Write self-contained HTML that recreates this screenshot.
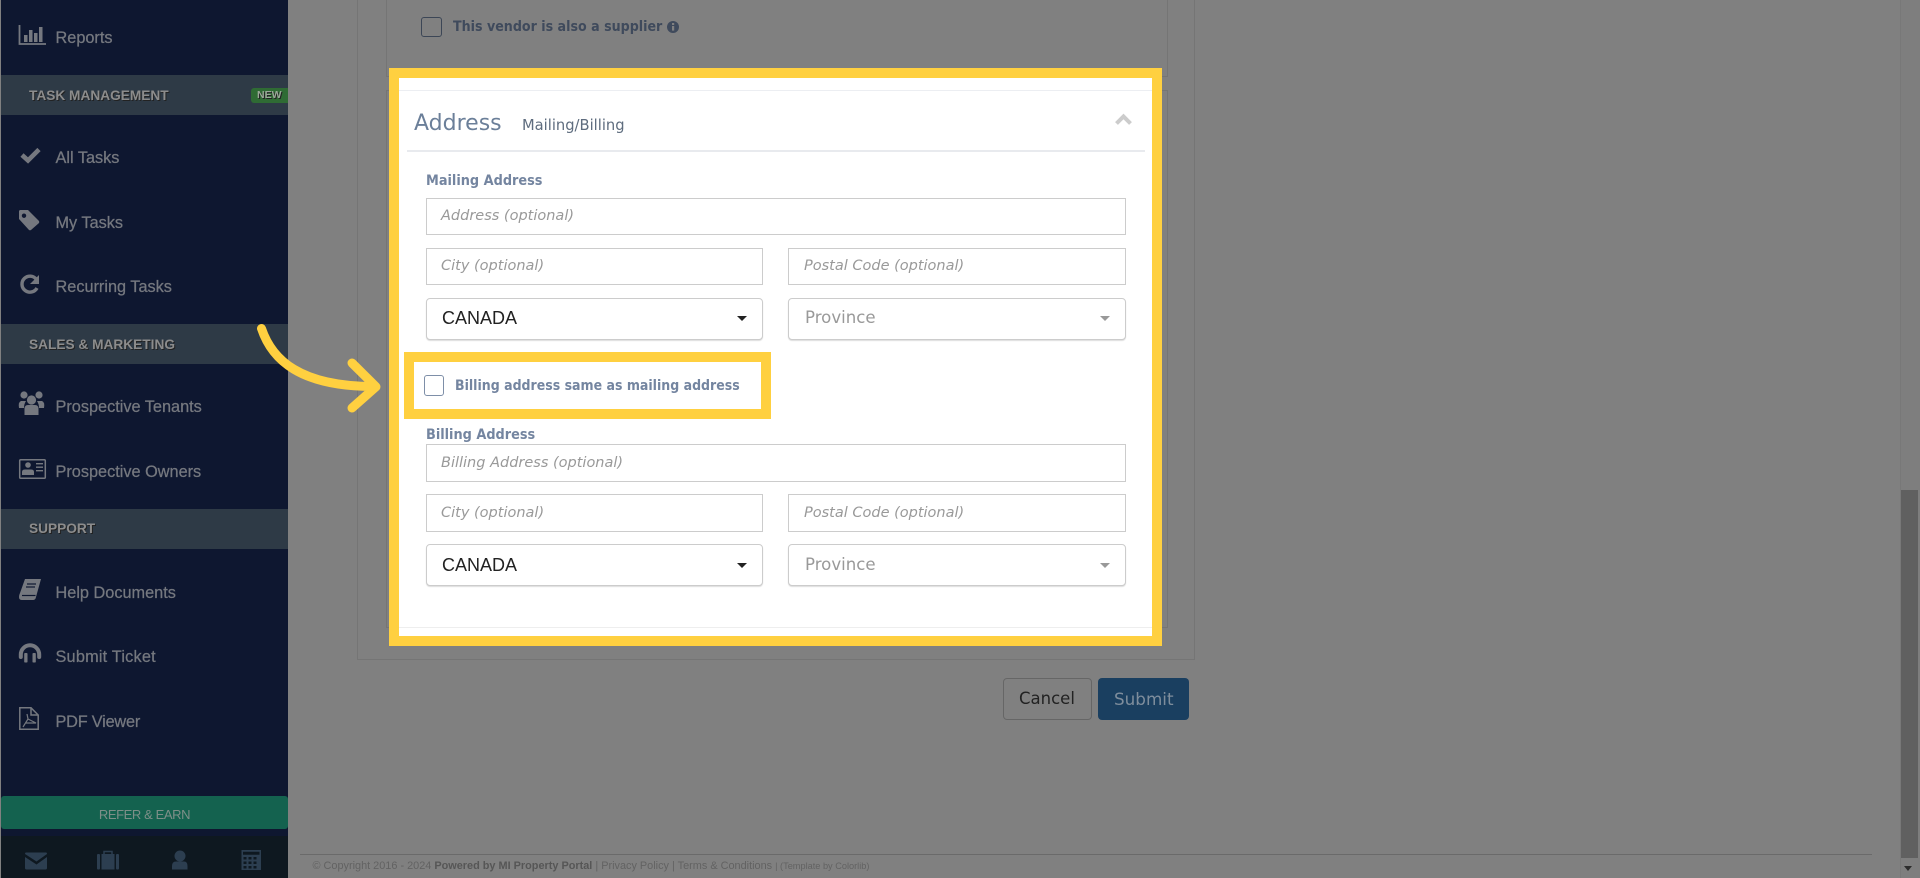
<!DOCTYPE html>
<html><head><meta charset="utf-8"><style>
html,body{margin:0;padding:0;width:1920px;height:878px;overflow:hidden;background:#808080}
div,span,svg{position:absolute}
.t{white-space:nowrap;line-height:20px;font-family:"DejaVu Sans",sans-serif}
.nav{left:55.500px;color:#75787f;font:16.300px/20px "Liberation Sans",sans-serif;white-space:nowrap;-webkit-text-stroke:.25px #75787f}
.band{left:1px;width:287px;height:40px;background:#2e3a46}
.sec{left:29px;color:#8c8c8c;font:bold 13.700px/20px "Liberation Sans",sans-serif;text-shadow:1px 1px 0 #222;white-space:nowrap}
.in{background:#fff;border:1.500px solid #ccc;box-sizing:border-box}
.ph{font:oblique 14.500px/20px "DejaVu Sans",sans-serif;color:#999;white-space:nowrap}
.sel{background:#fff;border:1.500px solid #ccc;border-radius:4px;box-sizing:border-box;box-shadow:0 1px 1px #ddd}
.can{font:18px/20px "Liberation Sans",sans-serif;color:#222;white-space:nowrap}
.pro{font:16.600px/20px "DejaVu Sans",sans-serif;color:#999;white-space:nowrap}
.lab{font:bold 14px/20px "DejaVu Sans",sans-serif;color:#7485a0;white-space:nowrap;transform:scaleX(.92);transform-origin:0 50%}
.cd{width:0;height:0;border-left:5px solid transparent;border-right:5px solid transparent;border-top:5px solid #222}
.cp{width:0;height:0;border-left:5px solid transparent;border-right:5px solid transparent;border-top:5px solid #999}
</style></head><body>

<!-- main panels -->
<div style="left:357px;top:-2px;width:836px;height:661px;border:1px solid #757575;border-top:0"></div>
<div style="left:386px;top:-2px;width:780px;height:78px;border:1px solid #757575;border-top:0"></div>
<div style="left:386px;top:90px;width:780px;height:536px;border:1px solid #757575"></div>

<div style="left:421px;top:17px;width:19px;height:18px;border:1.500px solid #3c4656;border-radius:3px"></div>
<div class="t" style="left:453px;top:17px;font-weight:bold;font-size:14px;color:#3f4a5c;transform:scaleX(.905);transform-origin:0 50%">This vendor is also a supplier</div>
<svg style="left:667px;top:21px" width="12" height="12" viewBox="0 0 12 12"><circle cx="6" cy="6" r="6" fill="#3f4a5c"/><rect x="5" y="2" width="2.200" height="2" fill="#808080"/><rect x="5" y="5" width="2.200" height="4.600" fill="#808080"/></svg>

<!-- yellow box -->
<div style="left:389px;top:68px;width:753px;height:558px;border:10px solid #ffd040;background:#fff"></div>
<div style="left:399px;top:90px;width:753px;height:1px;background:#eceef2"></div>
<div class="t" style="left:414px;top:112px;font-size:22px;color:#6b7f99;line-height:24px">Address</div>
<div class="t" style="left:522px;top:116px;font-size:14.700px;color:#5e6c7e">Mailing/Billing</div>
<svg style="left:1114px;top:113px" width="19" height="13" viewBox="0 0 19 13"><path d="M2.500 10.500 L9.500 3.500 L16.500 10.500" fill="none" stroke="#ccc" stroke-width="4"/></svg>
<div style="left:407px;top:150px;width:738px;height:1.500px;background:#e8eaee"></div>
<div style="left:399px;top:627px;width:753px;height:1px;background:#eee"></div>

<div class="lab" style="left:426px;top:171px">Mailing Address</div>
<div class="in" style="left:426px;top:198px;width:700px;height:37px"></div>
<div class="ph" style="left:441px;top:206px">Address (optional)</div>
<div class="in" style="left:426px;top:248px;width:337px;height:37px"></div>
<div class="ph" style="left:441px;top:256px">City (optional)</div>
<div class="in" style="left:788px;top:248px;width:338px;height:37px"></div>
<div class="ph" style="left:804px;top:256px">Postal Code (optional)</div>
<div class="sel" style="left:426px;top:298px;width:337px;height:42px"></div>
<div class="can" style="left:442px;top:308px">CANADA</div>
<div class="cd" style="left:737px;top:316px"></div>
<div class="sel" style="left:788px;top:298px;width:338px;height:42px"></div>
<div class="pro" style="left:805px;top:308px">Province</div>
<div class="cp" style="left:1100px;top:316px"></div>

<!-- highlighted checkbox -->
<div style="left:404px;top:352px;width:347px;height:47px;border:10px solid #ffd040;background:#fff"></div>
<div style="left:424px;top:375px;width:18px;height:19px;border:1.500px solid #7e8fa8;border-radius:3px;background:#fff"></div>
<div class="lab" style="left:455px;top:375.500px;transform:scaleX(.897)">Billing address same as mailing address</div>

<div class="lab" style="left:426px;top:424.500px">Billing Address</div>
<div class="in" style="left:426px;top:444px;width:700px;height:38px"></div>
<div class="ph" style="left:441px;top:453px">Billing Address (optional)</div>
<div class="in" style="left:426px;top:494px;width:337px;height:38px"></div>
<div class="ph" style="left:441px;top:503px">City (optional)</div>
<div class="in" style="left:788px;top:494px;width:338px;height:38px"></div>
<div class="ph" style="left:804px;top:503px">Postal Code (optional)</div>
<div class="sel" style="left:426px;top:544px;width:337px;height:42px"></div>
<div class="can" style="left:442px;top:555px">CANADA</div>
<div class="cd" style="left:737px;top:563px"></div>
<div class="sel" style="left:788px;top:544px;width:338px;height:42px"></div>
<div class="pro" style="left:805px;top:555px">Province</div>
<div class="cp" style="left:1100px;top:563px"></div>

<!-- buttons -->
<div style="left:1003px;top:678px;width:87px;height:40px;border:1px solid #666;border-radius:4px"></div>
<div class="t" style="left:1019px;top:689px;font-size:16.500px;color:#222">Cancel</div>
<div style="left:1098px;top:678px;width:91px;height:42px;background:#1a3f60;border-radius:4px"></div>
<div class="t" style="left:1114px;top:689px;font-size:16.800px;color:#7e8d9c">Submit</div>

<!-- footer -->
<div style="left:300px;top:854px;width:1572px;height:1px;background:#6a6a6a"></div>
<div style="left:312.500px;top:858.500px;font:10.900px/14px 'Liberation Sans',sans-serif;color:#626262;white-space:nowrap">© Copyright 2016 - 2024 <b style="color:#565656">Powered by MI Property Portal</b> | Privacy Policy | Terms &amp; Conditions <small style="font-size:9.200px">| (Template by Colorlib)</small></div>

<!-- scrollbar -->
<div style="left:1900px;top:0;width:20px;height:878px;background:#7e7e7e;border-left:1px solid #787878;box-sizing:border-box"></div>
<div style="left:1901px;top:490px;width:17px;height:368px;background:#606060"></div>
<div class="cd" style="left:1904px;top:866px;border-top-color:#2c2c2c;border-left-width:4.500px;border-right-width:4.500px"></div>

<!-- sidebar -->
<div style="left:1px;top:0;width:287px;height:878px;background:#0e1730"></div>
<div class="nav" style="top:28px">Reports</div>
<div class="band" style="top:75px"></div>
<div class="sec" style="top:86px">TASK MANAGEMENT</div>
<div style="left:251px;top:88px;width:37px;height:15px;background:#2f6b34;border-radius:3px 0 0 3px"></div>
<div style="left:257px;top:88px;font:bold 10.500px/15px 'Liberation Sans',sans-serif;color:#9aa898;text-shadow:1px 1px 0 #222">NEW</div>
<div class="nav" style="top:148px">All Tasks</div>
<div class="nav" style="top:213px">My Tasks</div>
<div class="nav" style="top:277px">Recurring Tasks</div>
<div class="band" style="top:324px"></div>
<div class="sec" style="top:335px">SALES &amp; MARKETING</div>
<div class="nav" style="top:397px">Prospective Tenants</div>
<div class="nav" style="top:462px">Prospective Owners</div>
<div class="band" style="top:509px"></div>
<div class="sec" style="top:519px">SUPPORT</div>
<div class="nav" style="top:583px">Help Documents</div>
<div class="nav" style="top:647px;letter-spacing:.2px">Submit Ticket</div>
<div class="nav" style="top:712px;letter-spacing:-.2px">PDF Viewer</div>
<div style="left:1px;top:796px;width:287px;height:33px;background:#14624f;border-radius:3px"></div>
<div style="left:1px;top:796px;width:287px;text-align:center;font:13px/38px 'Liberation Sans',sans-serif;letter-spacing:-.4px;color:#7d8f88">REFER &amp; EARN</div>
<div style="left:1px;top:836px;width:287px;height:42px;background:#0e1820"></div>

<!-- icons -->
<svg style="left:0;top:0" width="289" height="878" viewBox="0 0 289 878" fill="#75787f">
<!-- reports -->
<path d="M19.500 25V44H46" fill="none" stroke="#75787f" stroke-width="1.800"/>
<rect x="24" y="35" width="3.500" height="7"/><rect x="29" y="30" width="3.500" height="12"/><rect x="34" y="33" width="3.500" height="9"/><rect x="39" y="27" width="3.500" height="15"/>
<!-- check -->
<path d="M22 155L28 160.500L39 149.500" fill="none" stroke="#75787f" stroke-width="4.600"/>
<!-- tag -->
<path fill-rule="evenodd" d="M19 211.500Q19 210 20.500 210H28L39 221Q39.500 222 39 223L31 230Q30 230.500 29 230L19 219ZM24 213.500a2.200 2.200 0 1 0 .01 0Z"/>
<!-- refresh -->
<path d="M36.500 279.500A8 8 0 1 0 37 288" fill="none" stroke="#75787f" stroke-width="3.400"/>
<path d="M39 275V284H30Z"/>
<!-- group -->
<circle cx="24" cy="395" r="3.600"/><circle cx="39" cy="395" r="3.600"/><circle cx="31.500" cy="400" r="4.600"/>
<path d="M19 408Q18 402 21 401H26Q24 404 24 408ZM44 408Q45 402 42 401H37Q39 404 39 408Z"/>
<path d="M24.500 415V409Q24.500 405 28 405H35Q38.500 405 38.500 409V415Z"/>
<!-- id card -->
<rect x="19.700" y="459.700" width="25.600" height="18.600" rx="1" fill="none" stroke="#75787f" stroke-width="1.500"/>
<circle cx="28" cy="465" r="2.800"/><path d="M22 475V472Q22 469.500 25 469.500H31Q34 469.500 34 472V475Z"/>
<rect x="36" y="463" width="7" height="1.400"/><rect x="36" y="466.500" width="7" height="1.400"/><rect x="36" y="470" width="7" height="1.400"/>
<!-- book -->
<path d="M25 579H41L36 597Q35.500 600 33 600H22Q19 600 19 597Q19 595 20 593Z"/>
<path d="M22 595.500H35.500" stroke="#0e1730" stroke-width="1.200"/><path d="M27 584H36" stroke="#0e1730" stroke-width="1.200"/><path d="M26 587H35" stroke="#0e1730" stroke-width="1.200"/>
<!-- headphones -->
<path d="M20.800 657V654.500A9.200 9.200 0 0 1 39.200 654.500V657" fill="none" stroke="#75787f" stroke-width="4" stroke-linecap="round"/>
<rect x="24.200" y="653" width="3.300" height="9.500" rx=".8"/><rect x="32.500" y="653" width="3.300" height="9.500" rx=".8"/>
<!-- pdf -->
<path d="M19.800 707.800H31L38.200 715V729.200H19.800Z" fill="none" stroke="#75787f" stroke-width="1.500"/>
<path d="M31 708V715H38" fill="none" stroke="#75787f" stroke-width="1.500"/>
<path d="M23 727L28 719L27 714M28 719L36 723L26 723" fill="none" stroke="#75787f" stroke-width="1.200"/>
<!-- bottom bar -->
<g fill="#2c3e50">
<path d="M26 852.500H46Q47 852.500 47 854L36.500 861.500L25 854Q25 852.500 26 852.500Z"/>
<path d="M25 857L36.500 864.500L47 857V868Q47 869.500 45.500 869.500H26.500Q25 869.500 25 868Z"/>
<rect x="97" y="854" width="3" height="15.500" rx="1"/><rect x="101.500" y="854" width="13" height="15.500"/><rect x="116" y="854" width="3" height="15.500" rx="1"/>
<path d="M104 854V851.500H112V854" fill="none" stroke="#2c3e50" stroke-width="1.500"/>
<circle cx="180" cy="856" r="5.500"/><path d="M172 869.500V866Q172 861.500 176 861.500H184Q187.500 861.500 187.500 866V869.500Z"/>
<path fill-rule="evenodd" d="M241.500 850H261V870H241.500ZM243 851.800V854.800H259.500V851.800ZM243.500 857V859.500H246.500V857ZM248.500 857V859.500H251.500V857ZM253.500 857V859.500H256.500V857ZM243.500 861.500V864H246.500V861.500ZM248.500 861.500V864H251.500V861.500ZM253.500 861.500V864H256.500V861.500ZM243.500 866V868.500H246.500V866ZM248.500 866V868.500H251.500V866ZM253.500 866V868.500H256.500V866Z"/>
</g>
</svg>

<!-- arrow -->
<svg style="left:0;top:0" width="420" height="440" viewBox="0 0 420 440" fill="none"><path d="M261.500 328.500C272 360 300 386 372 386.500M352 363L376 386.800L352 408" stroke="#ffd040" stroke-width="9" stroke-linecap="round" stroke-linejoin="round"/></svg>
</body></html>
